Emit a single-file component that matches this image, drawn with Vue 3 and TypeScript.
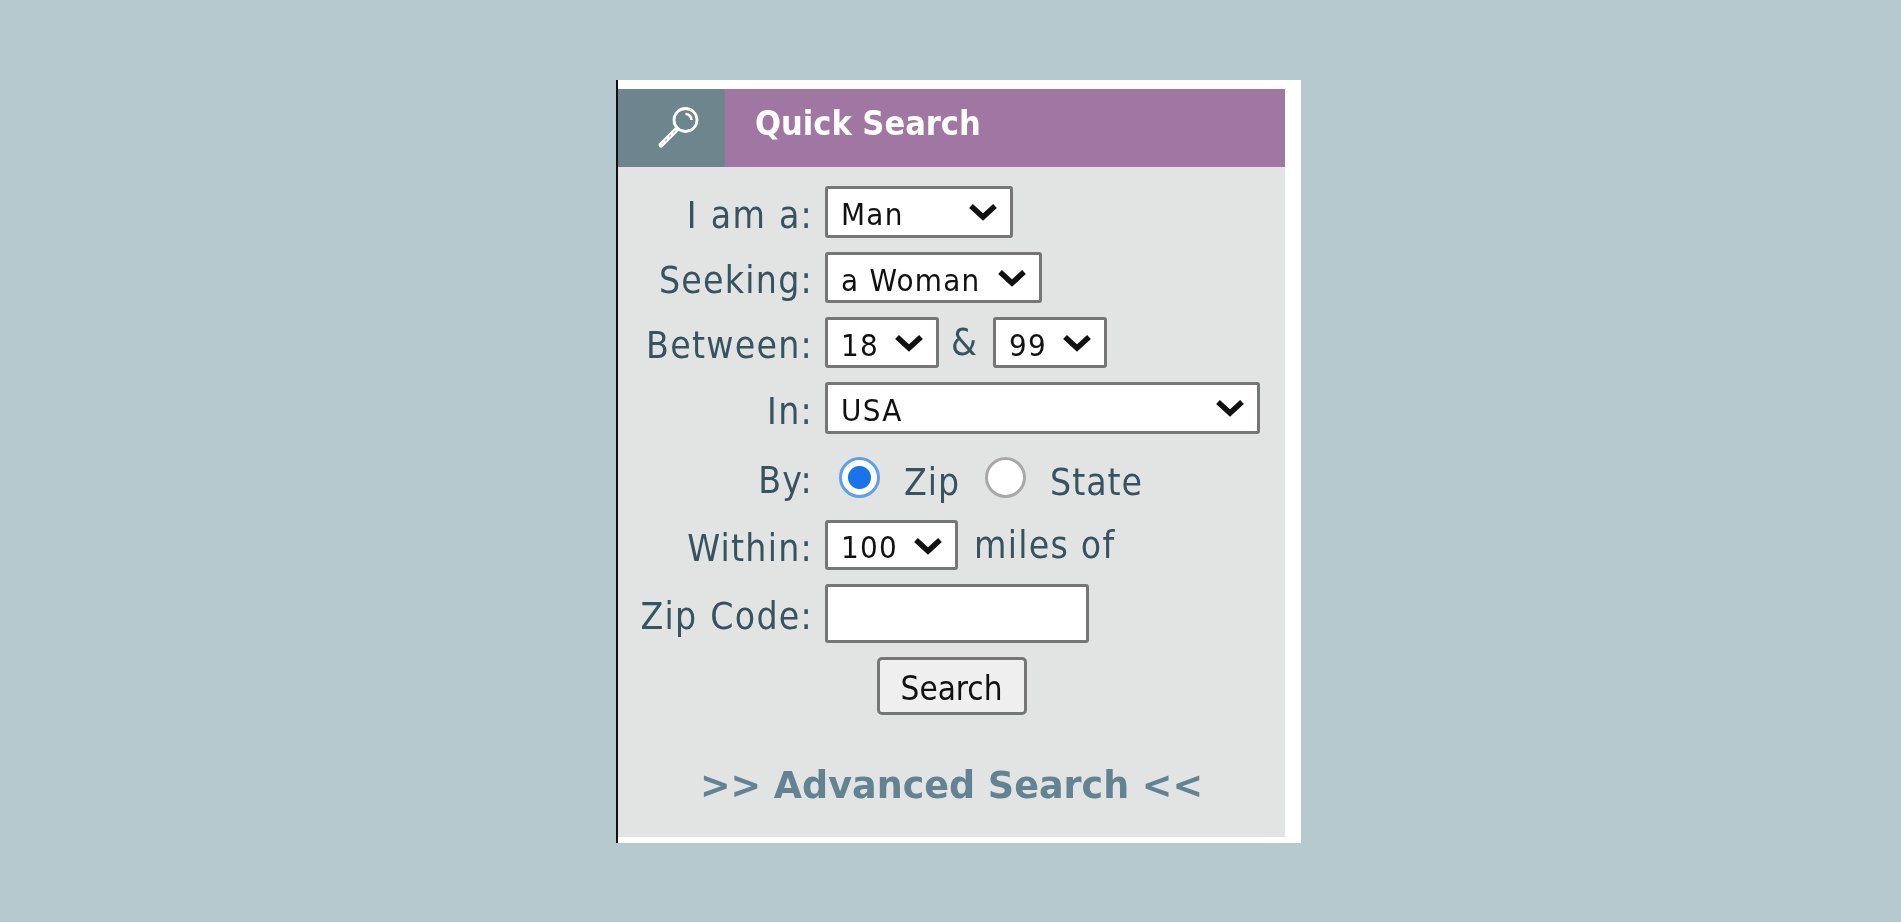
<template>
  <div class="page">
    <div class="card">
      <div class="panel">
        <div class="head">
          <div class="head-icon">
            <svg width="60" height="44" viewBox="0 0 60 44" fill="none" stroke="#fff">
              <circle cx="43.5" cy="14" r="11.5" stroke-width="2.8" />
              <path d="M43.5 8a6 6 0 0 1 6 6" stroke-width="2.5" />
              <path d="M35 23 19 39" stroke-width="5" stroke-linecap="round" />
              <path d="M33.5 24.5 20.5 37.5" stroke="#b9c6ca" stroke-width="1.4" stroke-dasharray="3 3" />
            </svg>
          </div>
          <div class="head-title">Quick Search</div>
        </div>

        <form class="form" @submit.prevent>
          <label class="lbl">I am a:</label>
          <div class="cell">
            <div class="sel w-man">
              <select v-model="gender"><option>Man</option><option>Woman</option></select>
              <svg class="chev" viewBox="0 0 30 18"><path d="M3 3l12 11L27 3" /></svg>
            </div>
          </div>

          <label class="lbl">Seeking:</label>
          <div class="cell">
            <div class="sel w-seek">
              <select v-model="seeking"><option>a Woman</option><option>a Man</option></select>
              <svg class="chev" viewBox="0 0 30 18"><path d="M3 3l12 11L27 3" /></svg>
            </div>
          </div>

          <label class="lbl">Between:</label>
          <div class="cell">
            <div class="sel w-age">
              <select v-model="ageMin"><option v-for="a in ages" :key="a">{{ a }}</option></select>
              <svg class="chev" viewBox="0 0 30 18"><path d="M3 3l12 11L27 3" /></svg>
            </div>
            <span class="amp">&amp;</span>
            <div class="sel w-age">
              <select v-model="ageMax"><option v-for="a in ages" :key="a">{{ a }}</option></select>
              <svg class="chev" viewBox="0 0 30 18"><path d="M3 3l12 11L27 3" /></svg>
            </div>
          </div>

          <label class="lbl">In:</label>
          <div class="cell">
            <div class="sel w-country">
              <select v-model="country"><option>USA</option><option>Canada</option></select>
              <svg class="chev" viewBox="0 0 30 18"><path d="M3 3l12 11L27 3" /></svg>
            </div>
          </div>

          <label class="lbl">By:</label>
          <div class="cell radios">
            <input v-model="by" class="radio" type="radio" value="zip" />
            <span class="radio-text zip">Zip</span>
            <input v-model="by" class="radio" type="radio" value="state" />
            <span class="radio-text">State</span>
          </div>

          <label class="lbl">Within:</label>
          <div class="cell">
            <div class="sel w-miles">
              <select v-model="miles"><option>100</option><option>50</option><option>25</option></select>
              <svg class="chev" viewBox="0 0 30 18"><path d="M3 3l12 11L27 3" /></svg>
            </div>
            <span class="miles">miles of</span>
          </div>

          <label class="lbl">Zip Code:</label>
          <div class="cell">
            <input v-model="zip" class="zip-input" type="text" />
          </div>

          <div class="btn-row">
            <button class="btn" type="submit">Search</button>
          </div>
        </form>

        <a class="adv">&gt;&gt; Advanced Search &lt;&lt;</a>
      </div>
    </div>
  </div>
</template>

<script setup lang="ts">
import { ref } from "vue";

const ages = [18, 25, 35, 45, 55, 65, 99];

const gender = ref("Man");
const seeking = ref("a Woman");
const ageMin = ref(18);
const ageMax = ref(99);
const country = ref("USA");
const by = ref("zip");
const miles = ref("100");
const zip = ref("");
</script>

<style>
html,
body {
  margin: 0;
  background: #b5c9cf;
}
</style>

<style scoped>
.page {
  height: 922px;
  box-sizing: border-box;
  padding: 80px 0 0 616px;
  background: #b5c9cf;
  font-family: "DejaVu Sans Condensed", "DejaVu Sans", sans-serif;
  overflow: hidden;
}

.card {
  width: 667px;
  height: 748px;
  padding: 9px 16px 6px 0;
  border-left: 2px solid #111;
  background: #fff;
}

.panel {
  height: 748px;
  background: #e2e4e4;
  filter: blur(0.5px);
}

.head {
  display: flex;
  height: 78px;
  background: #a076a2;
}

.head-icon {
  width: 107px;
  display: flex;
  align-items: center;
  justify-content: center;
  background: #6d858d;
}

.head-title {
  padding-left: 30px;
  line-height: 68px;
  font-size: 34px;
  font-weight: 700;
  color: #fff;
}

.form {
  display: grid;
  grid-template-columns: 195px 1fr;
  grid-template-rows: 52px 51px 51px 52px 58px 50px 59px 58px;
  column-gap: 12px;
  row-gap: 14px;
  padding-top: 19px;
  background: linear-gradient(#e8e0e8, #e2e4e4 9px);
}

.lbl {
  display: flex;
  align-items: center;
  justify-content: flex-end;
  padding-top: 6px;
  font-size: 37px;
  letter-spacing: 1.25px;
  word-spacing: 1px;
  white-space: pre;
  color: #36535f;
}

.cell {
  display: flex;
  align-items: center;
}

.sel {
  position: relative;
  height: 100%;
  flex: none;
}

.sel select {
  width: 100%;
  height: 100%;
  box-sizing: border-box;
  padding: 4px 0 0 13px;
  appearance: none;
  border: 3px solid #767676;
  border-radius: 3px;
  background: #fff;
  font-family: inherit;
  font-size: 31px;
  letter-spacing: 1.25px;
  color: #111;
}

.chev {
  position: absolute;
  top: 17px;
  right: 15px;
  width: 30px;
  height: 18px;
  fill: none;
  stroke: #111;
  stroke-width: 5.5;
  pointer-events: none;
}

.w-man {
  width: 188px;
}

.w-seek {
  width: 217px;
}

.w-age {
  width: 114px;
}

.w-country {
  width: 435px;
}

.w-miles {
  width: 133px;
}

.amp {
  width: 54px;
  padding-right: 4px;
  box-sizing: border-box;
  text-align: center;
  font-size: 37px;
  color: #36535f;
}

.radios {
  padding-left: 14px;
}

.radio {
  flex: none;
  width: 41px;
  height: 41px;
  margin: 0;
  box-sizing: border-box;
  appearance: none;
  border: 3px solid #a8a8a8;
  border-radius: 50%;
  background: #fff;
}

.radio:checked {
  border-color: #5f9fe8;
  background: radial-gradient(circle, #1a73e8 0 11px, #fff 12px);
}

.radio-text {
  margin: 10px 0 0 24px;
  font-size: 37px;
  letter-spacing: 1px;
  color: #36535f;
}

.radio-text.zip {
  width: 81px;
}

.miles {
  margin-left: 16px;
  font-size: 37px;
  letter-spacing: 1.25px;
  color: #36535f;
}

.zip-input {
  width: 264px;
  height: 100%;
  box-sizing: border-box;
  border: 3px solid #767676;
  border-radius: 3px;
  background: #fff;
}

.btn-row {
  grid-column: 1 / -1;
  display: flex;
  justify-content: center;
}

.btn {
  width: 150px;
  padding: 4px 0 0;
  border: 3px solid #767676;
  border-radius: 5px;
  background: #efefef;
  font-family: inherit;
  font-size: 33px;
  color: #111;
}

.adv {
  display: block;
  margin-top: 49px;
  text-align: center;
  font-family: "DejaVu Sans", sans-serif;
  font-size: 36.5px;
  font-weight: 700;
  color: #638292;
}
</style>
